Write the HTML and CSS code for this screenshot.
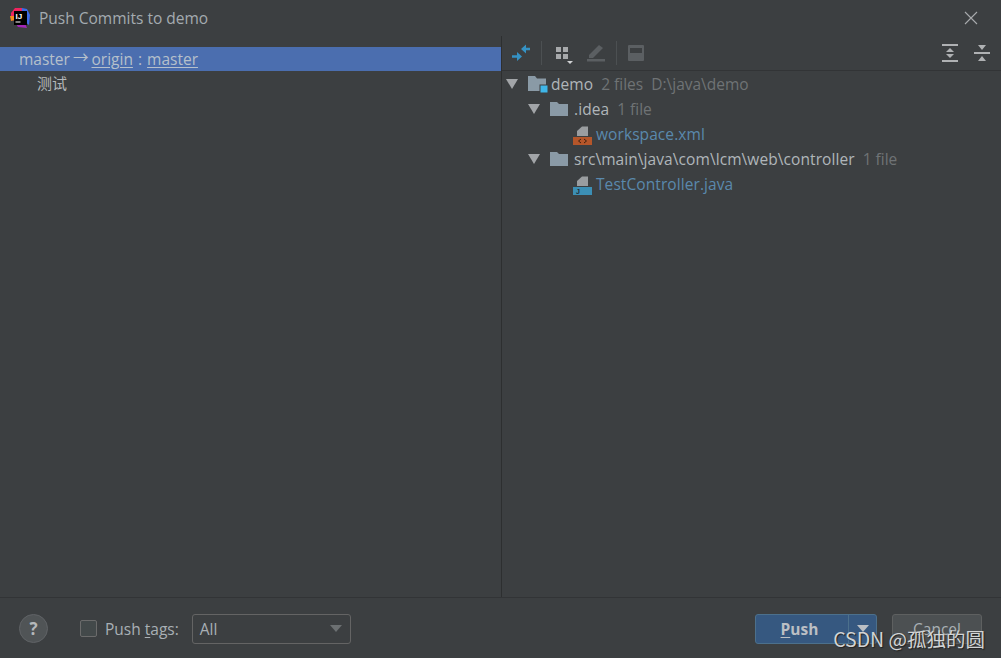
FILE: index.html
```html
<!DOCTYPE html>
<html lang="en">
<head>
    <meta charset="UTF-8">
    <title>Push Commits to demo</title>
    <link rel="stylesheet" href="styles.css">
</head>
<body>
    <div class="dialog">
        <!-- Title bar -->
        <div class="titlebar">
            <svg class="app-logo" width="22" height="22" viewBox="0 0 22 22">
                <path d="M2 6 L6 1 L13 1 L13 9 L6 14 L2 12 Z" fill="#f0245f"/>
                <path d="M13 1 L18 2 L21 8 L20 18 L12 12 Z" fill="#3d6be8"/>
                <path d="M1 9 L6 9 L6 13 L2 14 Z" fill="#f58a1f"/>
                <path d="M5 14 L9 20 L18 21 L14 12 Z" fill="#a327b8"/>
                <rect x="5" y="4" width="13" height="14" fill="#000"/>
                <text class="logo-text" x="6.5" y="12">IJ</text>
                <rect x="6.5" y="14.5" width="5" height="1" fill="#fff"/>
            </svg>
            <span class="title">Push Commits to demo</span>
            <svg class="close" width="14" height="14" viewBox="0 0 14 14">
                <path d="M1 1 L13 13 M13 1 L1 13" stroke="#a9abad" stroke-width="1.1" fill="none"/>
            </svg>
        </div>

        <div class="main">
            <!-- Commit list -->
            <div class="left">
                <div class="branch-row">master <span class="arrow">→</span> <u>origin</u> <span class="colon">:</span> <u>master</u></div>
                <div class="commit-row">测试</div>
            </div>

            <!-- Changes tree -->
            <div class="right">
                <div class="toolbar">
                    <svg width="20" height="20" viewBox="0 0 20 20">
                        <path d="M19 4.7 H15 V1.5 L10 6 L15 10.5 V7.3 H19 Z" fill="#3592c4"/>
                        <path d="M1 12.2 H6 V9 L11 13.5 L6 18 V14.8 H1 Z" fill="#3592c4"/>
                    </svg>
                    <span class="tool-sep first"></span>
                    <svg class="group-icon" width="18" height="21" viewBox="0 0 18 21">
                        <rect x="1" y="4" width="5" height="5" fill="#a7a9ab"/>
                        <rect x="8" y="4" width="5" height="5" fill="#a7a9ab"/>
                        <rect x="1" y="11" width="5" height="5" fill="#a7a9ab"/>
                        <rect x="8" y="11" width="5" height="5" fill="#a7a9ab"/>
                        <path d="M12 18 H18 L15 21 Z" fill="#d0d2d4"/>
                    </svg>
                    <svg class="edit-icon" width="20" height="20" viewBox="0 0 20 20">
                        <path d="M3 12 L13 2 L17 5 L7 15 L3 15 Z" fill="#5b5f62"/>
                        <rect x="1" y="16" width="18" height="2.5" fill="#5b5f62"/>
                    </svg>
                    <span class="tool-sep second"></span>
                    <svg class="save-icon" width="16" height="16" viewBox="0 0 16 16">
                        <rect width="16" height="16" rx="1" fill="#5b5f62"/>
                        <rect x="2" y="3" width="12" height="5" fill="#3c3f41"/>
                    </svg>
                    <span class="spacer"></span>
                    <svg class="expand-icon" width="16" height="18" viewBox="0 0 16 18">
                        <rect y="0" width="16" height="2" fill="#afb1b3"/>
                        <rect y="16" width="16" height="2" fill="#afb1b3"/>
                        <path d="M8 4 L12 8 H4 Z M8 14 L4 10 H12 Z" fill="#afb1b3"/>
                    </svg>
                    <svg class="collapse-icon" width="16" height="18" viewBox="0 0 16 18">
                        <rect y="8" width="16" height="2" fill="#afb1b3"/>
                        <path d="M4 1 H12 L8 6 Z M8 12 L12 17 H4 Z" fill="#afb1b3"/>
                    </svg>
                </div>

                <div class="tree">
                    <div class="tree-row">
                        <span class="toggle"></span>
                        <svg class="node-icon" width="20" height="18" viewBox="0 0 20 18">
                            <path d="M0 1 H7 L9 3.5 H18 V16 H0 Z" fill="#8a9aa6"/>
                            <rect x="11.5" y="9.5" width="8" height="8" fill="#3c3f41"/>
                            <rect x="12.5" y="10.5" width="7" height="7" fill="#3fb6e8"/>
                        </svg>
                        <span class="name">demo</span>
                        <span class="meta">2 files</span>
                        <span class="meta path">D:\java\demo</span>
                    </div>
                    <div class="tree-row level-1">
                        <span class="toggle"></span>
                        <svg class="node-icon folder" width="18" height="16" viewBox="0 0 18 16">
                            <path d="M0 1 H7 L9 3 H18 V15 H0 Z" fill="#8a9aa6"/>
                        </svg>
                        <span class="name">.idea</span>
                        <span class="meta">1 file</span>
                    </div>
                    <div class="tree-row level-2">
                        <svg class="file-icon" width="20" height="22" viewBox="0 0 20 22">
                            <path d="M9 3.5 H15 V13 H4 V8 Z" fill="#9a9da0"/>
                            <rect x="0" y="14" width="19" height="8" fill="#b5562a"/>
                            <path d="M8 16 L5.5 18 L8 20 M11 16 L13.5 18 L11 20" stroke="#3c2010" stroke-width="1" fill="none"/>
                        </svg>
                        <span class="name changed">workspace.xml</span>
                    </div>
                    <div class="tree-row level-1">
                        <span class="toggle"></span>
                        <svg class="node-icon folder" width="18" height="16" viewBox="0 0 18 16">
                            <path d="M0 1 H7 L9 3 H18 V15 H0 Z" fill="#8a9aa6"/>
                        </svg>
                        <span class="name">src\main\java\com\lcm\web\controller</span>
                        <span class="meta">1 file</span>
                    </div>
                    <div class="tree-row level-2">
                        <svg class="file-icon" width="20" height="22" viewBox="0 0 20 22">
                            <path d="M9 3.5 H15 V13 H4 V8 Z" fill="#9a9da0"/>
                            <rect x="0" y="14" width="19" height="8" fill="#3c8fb5"/>
                            <text class="file-tag" x="3" y="21">J</text>
                        </svg>
                        <span class="name changed">TestController.java</span>
                    </div>
                </div>
            </div>
        </div>

        <!-- Bottom bar -->
        <div class="footer">
            <span class="help">?</span>
            <label class="tags">
                <span class="checkbox"></span>
                <span>Push <u>t</u>ags:</span>
            </label>
            <div class="select">
                <span>All</span>
                <span class="select-arrow"></span>
            </div>
            <span class="spacer"></span>
            <div class="push-btn">
                <span class="push-label"><u>P</u>ush</span>
                <span class="push-drop"><span class="drop-arrow"></span></span>
            </div>
            <div class="cancel-btn">Cancel</div>
        </div>

        <div class="watermark">CSDN @孤独的圆</div>
    </div>
</body>
</html>
```

FILE: styles.css
```css
* {
    margin: 0;
    padding: 0;
    box-sizing: border-box;
}

body {
    background: #3c3f41;
    font-family: "Open Sans", "Noto Sans CJK SC", sans-serif;
    font-size: 15.5px;
    color: #a9b0b5;
    overflow: hidden;
}

u {
    text-underline-offset: 2px;
}

.dialog {
    position: relative;
    width: 1001px;
    height: 658px;
    display: flex;
    flex-direction: column;
    background: #3c3f41;
}

/* Title bar */
.titlebar {
    height: 36px;
    display: flex;
    align-items: center;
    padding-left: 9px;
    flex-shrink: 0;
}

.logo-text {
    font-family: "Liberation Sans", sans-serif;
    font-size: 8px;
    font-weight: 700;
    fill: #fff;
}

.title {
    margin-left: 8px;
    color: #a4abb0;
    flex: 1;
}

.close {
    margin-right: 23px;
}

/* Main split */
.main {
    flex: 1;
    display: flex;
    min-height: 0;
}

.left {
    width: 502px;
    flex-shrink: 0;
    border-right: 1px solid #2d2f30;
    padding-top: 11px;
}

.branch-row {
    height: 24px;
    line-height: 24px;
    background: #4b6eaf;
    padding-left: 19px;
    color: #b6c0cb;
    white-space: nowrap;
}

.arrow {
    font-family: "Noto Sans CJK SC", sans-serif;
    margin-left: -1px;
    margin-right: -1px;
    line-height: 1;
    vertical-align: 2px;
}

.colon {
    margin: 0 1px;
}

.commit-row {
    height: 25px;
    line-height: 24px;
    padding-left: 37px;
    font-size: 15px;
    color: #b4b8ba;
}

.right {
    flex: 1;
    display: flex;
    flex-direction: column;
    min-width: 0;
}

/* Toolbar */
.toolbar {
    height: 35px;
    display: flex;
    align-items: center;
    padding-left: 9px;
    border-bottom: 1px solid #323436;
    flex-shrink: 0;
}

.tool-sep {
    width: 1px;
    height: 24px;
    background: #4c5052;
    margin-left: 10px;
    margin-right: 11px;
}

.tool-sep.first {
    margin-right: 13px;
}

.edit-icon {
    margin-left: 13px;
}

.expand-icon {
    margin-right: 16px;
}

.collapse-icon {
    margin-right: 11px;
}

.spacer {
    flex: 1;
}

/* Changes tree */
.tree-row {
    height: 25px;
    display: flex;
    align-items: center;
    padding-left: 4px;
    white-space: nowrap;
}

.level-1 {
    padding-left: 26px;
}

.level-2 {
    padding-left: 71px;
}

.toggle {
    width: 0;
    height: 0;
    border-left: 6px solid transparent;
    border-right: 6px solid transparent;
    border-top: 10px solid #a2a5a8;
    margin-right: 10px;
}

.node-icon {
    margin-right: 3px;
}

.node-icon.folder {
    margin-right: 6px;
}

.file-icon {
    margin-right: 3px;
}

.name {
    color: #b0b6ba;
    letter-spacing: 0.08px;
}

.name.changed {
    color: #5a89ad;
}

.meta {
    margin-left: 8px;
    color: #6f7375;
}

.file-tag {
    font-family: "Liberation Sans", sans-serif;
    font-size: 7px;
    font-weight: 700;
    fill: #1f2d35;
}

/* Bottom bar */
.footer {
    height: 61px;
    flex-shrink: 0;
    display: flex;
    align-items: center;
    border-top: 1px solid #323436;
    padding-left: 19px;
    padding-top: 1px;
}

.help {
    width: 29px;
    height: 29px;
    border-radius: 50%;
    background: #505456;
    border: 1px solid #606366;
    color: #b5b8ba;
    font-weight: 700;
    font-size: 17px;
    display: flex;
    align-items: center;
    justify-content: center;
}

.tags {
    margin-left: 32px;
    display: flex;
    align-items: center;
    gap: 8px;
}

.checkbox {
    width: 17px;
    height: 17px;
    border: 1px solid #6b6b6b;
    border-radius: 2px;
    background: #43494a;
}

.select {
    margin-left: 13px;
    width: 159px;
    height: 30px;
    border: 1px solid #646464;
    border-radius: 3px;
    display: flex;
    align-items: center;
    justify-content: space-between;
    padding: 0 8px 0 7px;
}

.select-arrow {
    width: 0;
    height: 0;
    border-left: 6px solid transparent;
    border-right: 6px solid transparent;
    border-top: 7px solid #6c7072;
}

.push-btn {
    width: 122px;
    height: 30px;
    display: flex;
    background: #365880;
    border: 1px solid #4c708c;
    border-radius: 3px;
    font-weight: 700;
    color: #bbbfc4;
}

.push-label {
    flex: 1;
    text-align: center;
    line-height: 28px;
    padding-right: 5px;
}

.push-drop {
    width: 28px;
    border-left: 1px solid #4c708c;
    display: flex;
    align-items: center;
    justify-content: center;
}

.drop-arrow {
    width: 0;
    height: 0;
    border-left: 6px solid transparent;
    border-right: 6px solid transparent;
    border-top: 7px solid #bbbfc4;
}

.cancel-btn {
    width: 90px;
    height: 30px;
    margin-left: 15px;
    margin-right: 19px;
    background: #4c5052;
    border: 1px solid #5e6060;
    border-radius: 3px;
    text-align: center;
    line-height: 28px;
    color: #a9b0b5;
}

/* Watermark over the buttons */
.watermark {
    position: absolute;
    right: 16px;
    top: 626px;
    font-family: "Noto Sans CJK SC", sans-serif;
    font-size: 19.5px;
    line-height: 26px;
    color: #d2d4d5;
    text-shadow: 1px 1px 1px #222;
    white-space: nowrap;
}
```
